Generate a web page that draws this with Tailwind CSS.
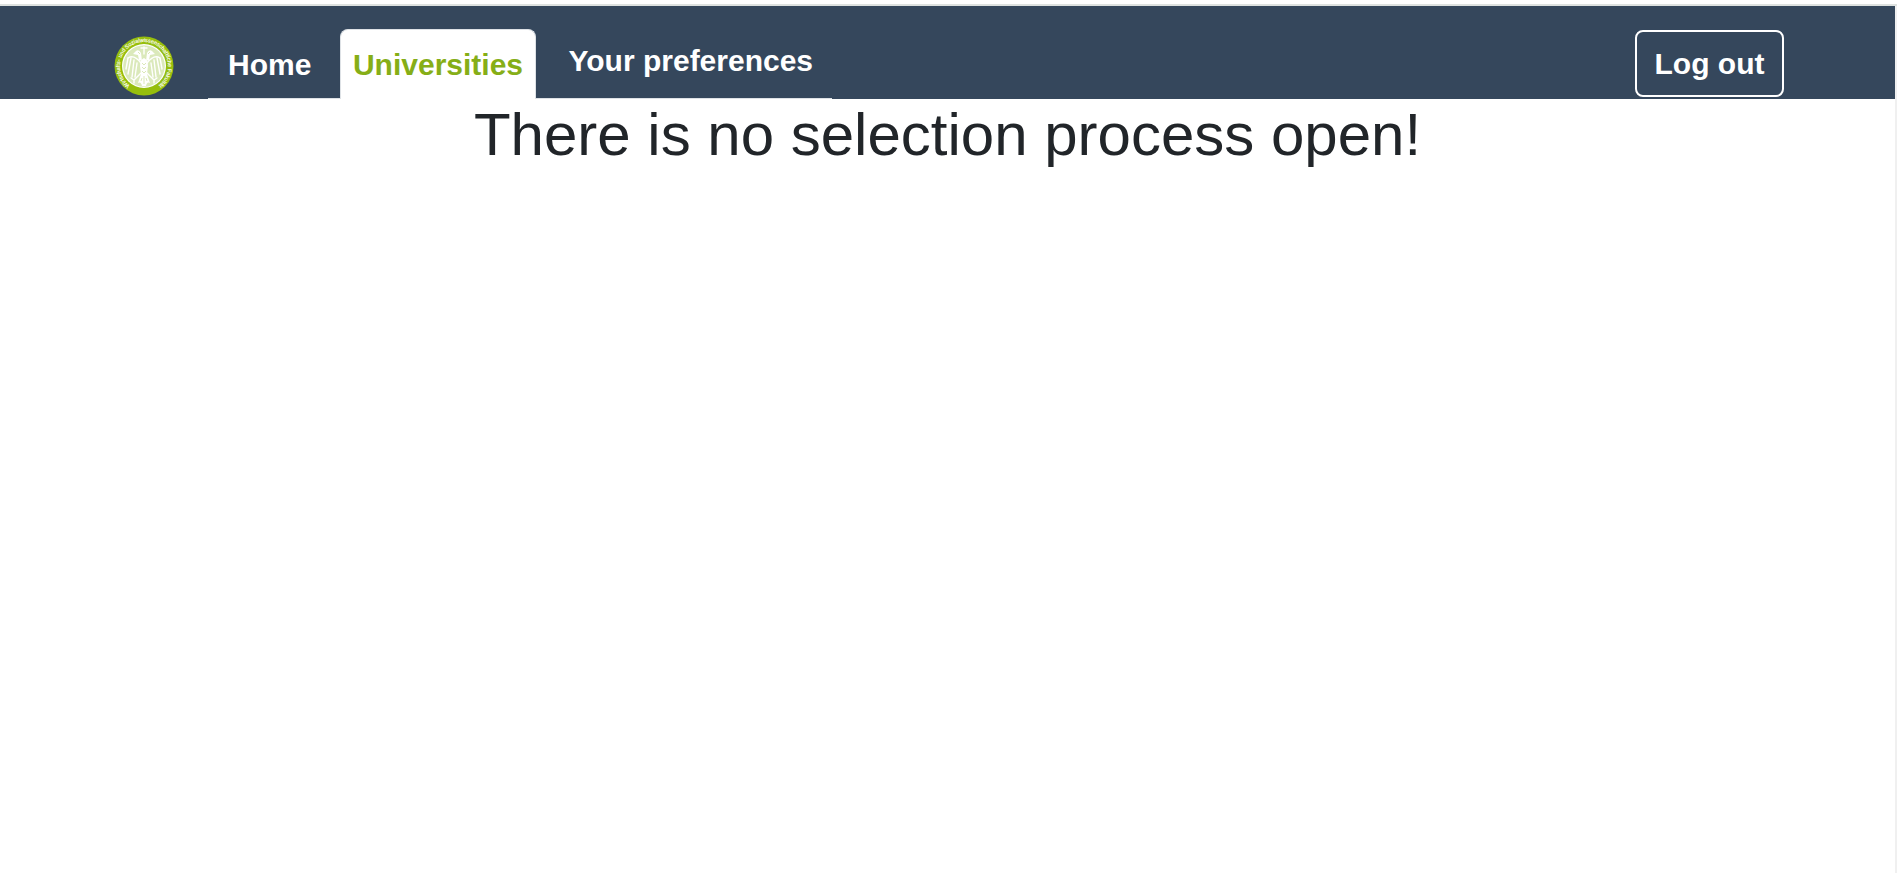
<!DOCTYPE html>
<html lang="en">
<head>
<meta charset="utf-8">
<title>Universities</title>
<script src="https://cdn.jsdelivr.net/npm/@tailwindcss/browser@4"></script>
</head>
<body class="h-[873px] overflow-hidden bg-white pt-1 font-['Liberation_Sans',Arial,sans-serif]">
<div class="flex h-full flex-col border-t-2 border-[#dee2e0]">
<div class="grow border-r-2 border-[#f0f0f0]">
  <header class="flex h-[93px] items-end bg-[#35475c] pr-[111px] pl-[114px] text-[30px] leading-[45px] font-bold text-white">
    <a class="mb-[3px] block size-[60px]" aria-label="Faculty">
      <svg class="size-[60px]" viewBox="0 0 60 60">
        <defs><path id="ring" d="M15.8 49.5 A24.1 24.1 0 1 1 44.2 49.5"/></defs>
        <circle cx="30" cy="30" r="29.5" fill="#96be0d"/>
        <circle cx="30" cy="30" r="22" fill="#fff"/>
        <circle cx="30" cy="30" r="20.8" fill="#dbe9bb"/>
        <text font-size="5.5" font-weight="400" fill="#fff" stroke="#fff" stroke-width=".12"><textPath href="#ring" textLength="120" lengthAdjust="spacingAndGlyphs">Wirtschafts- und Sozialwissenschaftliche Fakultät</textPath></text>
        <g fill="#fff">
          <path d="M30 22Q34 24 34 30L33 38L36 47Q33 45 32 50H28Q27 45 24 47L27 38L26 30Q26 24 30 22Z"/>
          <path d="M28 25L27 17Q25 13 22 15L19 18L24 19L25 24ZM32 25L33 17Q35 13 38 15L41 18L36 19L35 24Z"/>
        </g>
        <g fill="none" stroke="#fff" stroke-width="1.4" stroke-linecap="round">
          <path d="M27 27Q20 18 14 22M33 27Q40 18 46 22"/>
          <path d="M14 22L12 33M17 22L14 38M20 24L18 41M23 27L21 41M46 22L48 33M43 22L46 38M40 24L42 41M37 27L39 41"/>
          <path d="M27 37L20 44L17 42M20 44V47M33 37L40 44L43 42M40 44V47M27 12H33M30 11V18"/>
        </g>
        <path fill="none" stroke="#c2d988" stroke-width=".6" d="M28 27L30 29L32 27M28 31L30 33L32 31M28 35L30 37L32 35M30 40V48M28 42L27 45M32 42L33 45M24 16L26 18M36 16L34 18"/>
      </svg>
    </a>
    <nav class="ml-[34px] flex h-[70px] w-[624px] items-end">
      <a class="h-[70px] w-[132px] border-b border-[#dee2e6] pt-[13px] pl-[20px]">Home</a>
      <a class="h-[70px] w-[196px] rounded-t-lg border border-b-0 border-[#dee2e6] bg-white pt-[12px] text-center text-[#86ae17]">Universities</a>
      <a class="h-[70px] w-[296px] border-b border-[#dee2e6] pt-[9px] pl-[32.5px]">Your preferences</a>
    </nav>
    <button class="mb-[2px] ml-auto h-[67px] w-[149px] rounded-lg border-2 border-white font-bold">Log out</button>
  </header>
  <h1 class="text-center text-[60px] leading-[72px] text-[#212529]">There is no selection process open!</h1>
</div>
</div>
</body>
</html>
